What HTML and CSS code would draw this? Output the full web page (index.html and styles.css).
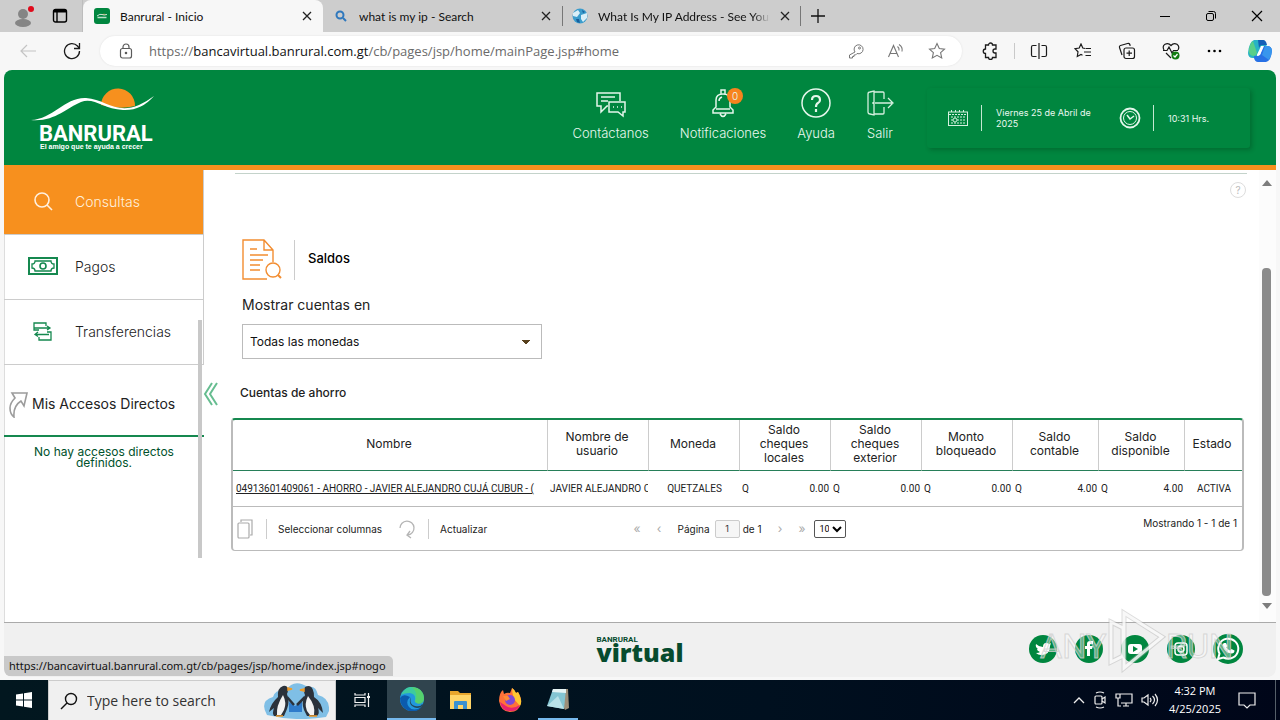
FILE: index.html
```html
<!DOCTYPE html>
<html lang="es">
<head>
    <meta charset="UTF-8">
    <meta name="viewport" content="width=device-width, initial-scale=1.0">
    <title>Banrural - Inicio</title>
    <link rel="stylesheet" href="styles.css">
</head>
<body>
    <!-- Browser tabs -->
    <div class="tab-strip">
        <div class="tab-tools">
            <button class="icon-btn" aria-label="Profile">
                <svg width="20" height="24" viewBox="0 0 20 24"><circle cx="9" cy="10" r="5" fill="#858585"/><ellipse cx="9" cy="19" rx="8" ry="4" fill="#858585"/><circle cx="17" cy="5" r="3" fill="#e00b1c"/></svg>
            </button>
            <button class="icon-btn" aria-label="Tab actions">
                <svg width="16" height="16" viewBox="0 0 16 16" fill="none" stroke="#000" stroke-width="1.4"><rect x="1.5" y="1.5" width="13" height="12.5" rx="2"/><path d="M2 3h12" stroke-width="3"/><path d="M5 3v11"/></svg>
            </button>
        </div>
        <div class="tab tab-active">
            <svg width="16" height="16" viewBox="0 0 16 16"><rect width="16" height="16" rx="3" fill="#00863f"/><path d="M8 6.500a2.500 2 0 0 1 4 0z" fill="#f79020"/><path d="M3 8Q6 5.500 8 6.500t5 0" stroke="#fff" stroke-width=".8" fill="none"/><path d="M3.500 9.500h9" stroke="#b9dfc8" stroke-width="1.500"/></svg>
            <span class="tab-title">Banrural - Inicio</span>
            <button class="icon-btn" aria-label="Close tab"><svg width="10" height="10" viewBox="0 0 10 10"><path d="M1 1l8 8M9 1L1 9" stroke="#222" stroke-width="1.3"/></svg></button>
        </div>
        <div class="tab">
            <svg width="16" height="16" viewBox="0 0 16 16" fill="none" stroke="#2f78bd" stroke-width="2"><circle cx="7" cy="7" r="3.500"/><path d="M10 10l3 3"/></svg>
            <span class="tab-title">what is my ip - Search</span>
            <button class="icon-btn" aria-label="Close tab"><svg width="10" height="10" viewBox="0 0 10 10"><path d="M1 1l8 8M9 1L1 9" stroke="#222" stroke-width="1.3"/></svg></button>
        </div>
        <div class="tab tab-divided">
            <svg width="16" height="16" viewBox="0 0 16 16"><circle cx="8" cy="8" r="7.500" fill="#3b9ccc"/><path d="M1 5l5-3 2 3-3 4-4-1zM9 7l6-2v5l-4 4-2-3z" fill="#d9eff8"/><path d="M4 11l3 0 1 4-3-1zM10 2l3 2-2 1z" fill="#175f9c"/></svg>
            <span class="tab-title tab-fade">What Is My IP Address - See Your</span>
            <button class="icon-btn" aria-label="Close tab"><svg width="10" height="10" viewBox="0 0 10 10"><path d="M1 1l8 8M9 1L1 9" stroke="#222" stroke-width="1.3"/></svg></button>
        </div>
        <button class="icon-btn new-tab" aria-label="New tab"><svg width="14" height="14" viewBox="0 0 14 14"><path d="M7 0v14M0 7h14" stroke="#111" stroke-width="1.3"/></svg></button>
        <div class="window-buttons">
            <button class="icon-btn" aria-label="Minimize"><svg width="12" height="12" viewBox="0 0 12 12"><path d="M1 6.500h10" stroke="#000"/></svg></button>
            <button class="icon-btn" aria-label="Restore"><svg width="12" height="12" viewBox="0 0 12 12" fill="none" stroke="#000"><rect x="1.500" y="3.500" width="7" height="7" rx="1.500"/><path d="M3.500 1.500h5a2 2 0 0 1 2 2v5"/></svg></button>
            <button class="icon-btn" aria-label="Close"><svg width="12" height="12" viewBox="0 0 12 12"><path d="M1 1l10 10M11 1L1 11" stroke="#000" stroke-width="1.2"/></svg></button>
        </div>
    </div>

    <!-- Address bar -->
    <div class="toolbar">
        <button class="icon-btn nav-btn" aria-label="Back"><svg width="18" height="16" viewBox="0 0 18 16" fill="none" stroke="#c4c4c4" stroke-width="1.2"><path d="M17 8H2M8 2L2 8l6 6"/></svg></button>
        <button class="icon-btn nav-btn" aria-label="Refresh"><svg width="18" height="18" viewBox="0 0 18 18" fill="none" stroke="#1b1b1b" stroke-width="1.3"><path d="M16.500 9A7.500 7.500 0 1 1 14.500 4l2 2.500"/><path d="M16.500 1v5.500H11"/></svg></button>
        <div class="address">
            <svg width="14" height="16" viewBox="0 0 14 16" fill="none" stroke="#5b5b5b" stroke-width="1.2"><rect x="1.500" y="5.500" width="11" height="9.500" rx="2"/><path d="M4 5.500V4a3 3 0 0 1 6 0v1.500"/><circle cx="7" cy="10" r=".7" fill="#555"/></svg>
            <div class="url" role="textbox" aria-label="Address" contenteditable="true">https://<span class="url-host">bancavirtual.banrural.com.gt</span>/cb/pages/jsp/home/mainPage.jsp#home</div>
            <button class="icon-btn" aria-label="Passwords"><svg width="16" height="16" viewBox="0 0 16 16" fill="none" stroke="#777"><path d="M7 9a4.500 4.500 0 1 1 2 1.500L7.500 12H6v1.500H4.500V15H1.500v-3z"/><circle cx="11.500" cy="5" r="1"/></svg></button>
            <button class="icon-btn" aria-label="Read aloud"><svg width="18" height="16" viewBox="0 0 18 16" fill="none" stroke="#777" stroke-width="1.1"><path d="M1.500 14L6.500 2.500 11.500 14M3.200 10.500h6.600M10.500 3.500q2 1.500 1.500 4M12 1.500q4 2.500 3 7"/></svg></button>
            <button class="icon-btn" aria-label="Favorite"><svg width="18" height="18" viewBox="0 0 18 18" fill="none" stroke="#777" stroke-width="1.100"><path d="M9 1.500l2.300 5 5.200.6-3.900 3.600 1.100 5.300L9 13.300 4.300 16l1.100-5.300L1.500 7.100l5.200-.6z"/></svg></button>
        </div>
        <div class="toolbar-icons">
            <button class="icon-btn" aria-label="Extensions"><svg width="18" height="18" viewBox="0 0 18 18" fill="none" stroke="#1b1b1b" stroke-width="1.300"><path d="M4.500 3h3a2 2 0 1 1 4 0h3.500v4h-1a2 2 0 1 0 0 4h1v4.500h-3.500a2 2 0 1 1-4 0h-3V11.500a2.200 2.200 0 1 1 0-4.500z"/></svg></button>
            <span class="toolbar-line"></span>
            <button class="icon-btn" aria-label="Split screen"><svg width="18" height="16" viewBox="0 0 18 16" fill="none" stroke="#1b1b1b" stroke-width="1.200"><path d="M6.500 2.500H3a1.500 1.500 0 0 0-1.500 1.500v8A1.500 1.500 0 0 0 3 13.500h3.500M11.500 2.500H15A1.500 1.500 0 0 1 16.500 4v8a1.500 1.500 0 0 1-1.500 1.500h-3.500M9 0v16"/></svg></button>
            <button class="icon-btn" aria-label="Favorites"><svg width="18" height="16" viewBox="0 0 18 16" fill="none" stroke="#1b1b1b" stroke-width="1.200"><path d="M11 5.500L8.800 5 7 1 5.200 5 1 5.700 4 8.800 3.300 13.500 7 11.500l1.500.8M11.500 5.500H17M10 9h7M11.500 12.500H17"/></svg></button>
            <button class="icon-btn" aria-label="Collections"><svg width="18" height="18" viewBox="0 0 18 18" fill="none" stroke="#1b1b1b" stroke-width="1.200"><rect x="6" y="6" width="10.500" height="10.500" rx="2"/><path d="M11.200 8.500v5.500M8.500 11.200H14M4 13L1.500 5.500Q1 4 2.500 3.500L9.500 1.500Q11.500 1 12 3l.2.800"/></svg></button>
            <button class="icon-btn" aria-label="Browser essentials"><svg width="18" height="18" viewBox="0 0 18 18" fill="none" stroke="#1b1b1b" stroke-width="1.200"><path d="M2 8Q0 4 3 2.200 6.500.500 9 3.500 11.500.500 15 2.200 18 4.500 16 8M4 11l5 5"/><path d="M1 8.500h4L7 5l3 6 1.500-2.500H16"/><circle cx="13.500" cy="13.500" r="4" fill="#117c10" stroke="none"/><path d="M11.500 13.500l1.500 1.500 2.500-3" stroke="#fff"/></svg></button>
            <button class="icon-btn" aria-label="More"><svg width="16" height="4" viewBox="0 0 16 4"><circle cx="3" cy="2" r="1.300"/><circle cx="8.500" cy="2" r="1.300"/><circle cx="14" cy="2" r="1.300"/></svg></button>
            <button class="icon-btn" aria-label="Copilot"><svg width="24" height="22" viewBox="0 0 24 22"><path d="M6 0h8q3 0 4 4l1 3h-5L10 13l-2 5H5q-5 0-5-5Q1 2 6 0z" fill="#28b3c5"/><path d="M10 0h5q3 0 4 5l-5 0q-2 0-3 3z" fill="#145fb7"/><path d="M1 9q1-6 4-8l4 12q-1 3-3 3Q0 16 1 9z" fill="#58cf8a"/><path d="M18 22h-8q-3 0-4-4l0-2h4q2 0 3-4l2-6h4q5 0 5 5-1 10-6 11z" fill="#2871e5"/><path d="M14 15l3-9h3q4 1 4 5-1 6-3 9z" fill="#3896ed"/><path d="M9 15l4-9h3l-4 9z" fill="#fff"/></svg></button>
        </div>
    </div>

    <!-- Bank page -->
    <div class="page">
        <header class="header">
            <svg class="logo" width="124" height="64" viewBox="0 0 124 64">
                <path d="M70 17a17 17 0 0 1 34 1q-14 4-34-1z" fill="#f7901e"/>
                <path d="M0 32C22 31 34 9 55 10 74 11 85 27 108 17Q115 14 123 8 110 23 92 22C72 21 63 9 50 14 35 20 24 34 0 32z" fill="#fff"/>
                <text x="8" y="53" class="logo-name">BANRURAL</text>
                <text x="9" y="61" class="logo-slogan">El amigo que te ayuda a crecer</text>
            </svg>
            <nav class="header-nav">
                <a href="#contacto"><svg width="32" height="30" viewBox="0 0 32 30" fill="none" stroke="#e4f6eb" stroke-width="1.500"><path d="M13 18h-1l-6 6v-6H2V5h23v8M6 9h14M6 13h7"/><path d="M14 14h16v10h-2v4l-5-4h-9z"/><path d="M18 19h1M22 19h1M26 19h1"/></svg>Contáctanos</a>
                <a href="#notificaciones"><svg width="30" height="30" viewBox="0 0 30 30" fill="none" stroke="#e4f6eb" stroke-width="1.500"><path d="M5 25v-3l3-3v-7q0-6 7-6t7 6v7l3 3v3zM12 26q3 5 6 0M13 6V2h4v4M11 13q0-3 3-4M8 21h14"/></svg><span class="badge">0</span>Notificaciones</a>
                <a href="#ayuda"><svg width="30" height="30" viewBox="0 0 30 30" fill="none" stroke="#e4f6eb" stroke-width="1.500"><circle cx="15" cy="15" r="14"/><path d="M11 12q0-4 4-4t4 4q0 2-2 3t-2 4M15 21v3" stroke-width="2.200"/></svg>Ayuda</a>
                <a href="#salir"><svg width="28" height="30" viewBox="0 0 28 30" fill="none" stroke="#d5f0df" stroke-width="1.300"><path d="M4 4l4-1v24l-4-1q-2 0-2-2V6q0-2 2-2zM8 4h9q1 0 1 1v6M8 26h9q1 0 1-1v-6M7 14v2M9 15h17M22 10l5 5-5 5"/></svg>Salir</a>
            </nav>
            <div class="clock-box">
                <svg width="22" height="18" viewBox="0 0 22 18" fill="none" stroke="#d5f0df"><rect x="1.500" y="3" width="19" height="13.500"/><path d="M2 5.500h18M4.500 1v3M8.500 1v3M12.500 1v3M16.500 1v3M4 8h14M4 11h14M4 14h14" stroke-dasharray="2 1"/><circle cx="8" cy="11" r="2" fill="#00863f"/></svg>
                <span class="box-line"></span>
                <span class="date">Viernes 25 de Abril de 2025</span>
                <svg width="22" height="22" viewBox="0 0 22 22" fill="none" stroke="#e4f6eb"><circle cx="11" cy="11" r="9.500" stroke-width="1.800"/><circle cx="11" cy="11" r="6.500"/><path d="M8 8l3 4 4-3" stroke-width="1.500"/></svg>
                <span class="box-line"></span>
                <span class="time">10:31 Hrs.</span>
            </div>
        </header>

        <div class="main">
            <aside class="sidebar">
                <nav class="menu">
                    <a class="menu-item active" href="#consultas"><svg width="32" height="20" viewBox="0 0 32 20" fill="none" stroke="#fff0df" stroke-width="1.600"><circle cx="15" cy="9" r="7"/><path d="M20 14l5 5"/></svg>Consultas</a>
                    <a class="menu-item" href="#pagos"><svg width="32" height="20" viewBox="0 0 32 20" fill="none" stroke="#15884f" stroke-width="2"><rect x="2" y="2" width="28" height="16"/><path d="M8 5h16q0 3 3 3v4q-3 0-3 3H8q0-3-3-3V8q3 0 3-3z" stroke-width="1.300"/><circle cx="16" cy="10" r="3" stroke-width="1.600"/></svg>Pagos</a>
                    <a class="menu-item" href="#transferencias"><svg width="32" height="20" viewBox="0 0 32 20" fill="none" stroke="#15884f" stroke-width="1.300"><path d="M12 9H7V2h12v3M7 7h16M20 5l3 2-3 2M11 11l-3 2.500 3 2M8 13.500h14M20 11h4v8H12v-3"/></svg>Transferencias</a>
                </nav>
                <h2 class="shortcuts-title"><svg width="24" height="28" viewBox="0 0 24 28" fill="none" stroke="#9c9c9c" stroke-width="1.600"><path d="M7 3h15l-3 13-3-5q-8 5-7 16-4-3-4-9 0-5 5-10z"/></svg>Mis Accesos Directos</h2>
                <p class="shortcuts-empty">No hay accesos directos definidos.</p>
                <span class="side-thumb"></span>
                <button class="icon-btn collapse" aria-label="Ocultar menú"><svg width="16" height="24" viewBox="0 0 16 24" fill="none" stroke="#66bd90" stroke-width="2"><path d="M9 1L2 12l7 11M14 1L7 12l7 11"/></svg></button>
            </aside>

            <main class="content">
                <hr class="top-line">
                <button class="help-dot" aria-label="Ayuda">?</button>
                <div class="section-title">
                    <svg width="40" height="42" viewBox="0 0 40 42" fill="none" stroke="#f28d31" stroke-width="1.400"><path d="M25 40H1V1h21l9 10v12M22 1v10h9"/><path d="M8 10h7M8 16h18M8 21h13M8 26h10M8 31h10"/><circle cx="31" cy="31" r="7"/><path d="M36 36l3 3" stroke-width="2"/></svg>
                    <h1>Saldos</h1>
                </div>
                <label class="currency-label" for="moneda">Mostrar cuentas en</label>
                <select class="currency" id="moneda">
                    <option>Todas las monedas</option>
                </select>
                <h2 class="table-title">Cuentas de ahorro</h2>

                <div class="grid">
                    <table>
                        <colgroup>
                            <col>
                            <col class="col-user">
                            <col class="col-money"><col class="col-money"><col class="col-money"><col class="col-money">
                            <col class="col-balance"><col class="col-balance">
                            <col class="col-state">
                        </colgroup>
                        <thead>
                            <tr>
                                <th>Nombre</th>
                                <th>Nombre de usuario</th>
                                <th>Moneda</th>
                                <th>Saldo cheques locales</th>
                                <th>Saldo cheques exterior</th>
                                <th>Monto bloqueado</th>
                                <th>Saldo contable</th>
                                <th>Saldo disponible</th>
                                <th>Estado</th>
                            </tr>
                        </thead>
                        <tbody>
                            <tr>
                                <td><a href="#cuenta">04913601409061 - AHORRO - JAVIER ALEJANDRO CUJÁ CUBUR - (</a></td>
                                <td>JAVIER ALEJANDRO C</td>
                                <td class="center">QUETZALES</td>
                                <td><span class="amount"><span>Q</span><span>0.00</span></span></td>
                                <td><span class="amount"><span>Q</span><span>0.00</span></span></td>
                                <td><span class="amount"><span>Q</span><span>0.00</span></span></td>
                                <td><span class="amount"><span>Q</span><span>4.00</span></span></td>
                                <td><span class="amount"><span>Q</span><span>4.00</span></span></td>
                                <td class="center">ACTIVA</td>
                            </tr>
                        </tbody>
                    </table>
                    <div class="grid-footer">
                        <div class="grid-actions">
                            <button class="grid-btn"><svg width="16" height="20" viewBox="0 0 16 20" fill="none" stroke="#aaa" stroke-width="1.200"><rect x="1" y="4" width="11" height="15" rx="1"/><path d="M4 3V1h11v15h-2"/></svg><span>Seleccionar columnas</span></button>
                            <button class="grid-btn"><svg width="16" height="20" viewBox="0 0 16 20" fill="none" stroke="#b5b5b5" stroke-width="1.300"><path d="M1 9a7 7 0 1 1 8 7M11 12l-3 4 4 3"/></svg><span>Actualizar</span></button>
                        </div>
                        <div class="pager">
                            <button class="page-arrow" aria-label="Primera">«</button>
                            <button class="page-arrow" aria-label="Anterior">‹</button>
                            <label for="pagina">Página</label>
                            <input id="pagina" class="page-input" type="text" value="1">
                            <span>de 1</span>
                            <button class="page-arrow next" aria-label="Siguiente">›</button>
                            <button class="page-arrow" aria-label="Última">»</button>
                            <select class="page-size" aria-label="Filas"><option>10</option></select>
                        </div>
                        <div class="grid-info">Mostrando 1 - 1 de 1</div>
                    </div>
                </div>
            </main>
            <div class="scrollbar">
                <svg width="10" height="6" viewBox="0 0 10 6"><path d="M5 0l5 6H0z" fill="#7d7d7d"/></svg>
                <span class="scroll-thumb"></span>
                <svg width="10" height="6" viewBox="0 0 10 6"><path d="M0 0h10L5 6z" fill="#7d7d7d"/></svg>
            </div>
        </div>

        <footer class="footer">
            <div class="footer-logo"><span class="footer-small">BANRURAL</span><span class="footer-big">virtual</span></div>
            <div class="social">
                <a href="#twitter" aria-label="Twitter"><svg width="28" height="28" viewBox="0 0 28 28"><circle cx="14" cy="14" r="14" fill="#00863f"/><path d="M7 9q3 3 7 3 0-4 3-4 2 0 3 1l2-1-1 3q0 9-9 9-3 0-5-2 3 0 4-1-3-1-3-3h1q-3-2-2-5z" fill="#fff"/></svg></a>
                <a href="#facebook" aria-label="Facebook"><svg width="28" height="28" viewBox="0 0 28 28"><circle cx="14" cy="14" r="14" fill="#00863f"/><path d="M12 21v-7h-2v-3h2V9q0-3 3-3h3v3h-2q-1 0-1 1v1h3l-1 3h-2v7z" fill="#fff"/></svg></a>
                <a href="#youtube" aria-label="YouTube"><svg width="28" height="28" viewBox="0 0 28 28"><circle cx="14" cy="14" r="14" fill="#00863f"/><rect x="7" y="9" width="14" height="10" rx="3" fill="#fff"/><path d="M12 11v6l5-3z" fill="#00863f"/></svg></a>
                <a href="#instagram" aria-label="Instagram"><svg width="28" height="28" viewBox="0 0 28 28" fill="none" stroke="#fff" stroke-width="1.500"><circle cx="14" cy="14" r="14" fill="#00863f" stroke="none"/><rect x="8" y="8" width="12" height="12" rx="3"/><circle cx="14" cy="14" r="3"/><circle cx="17.500" cy="10.500" r=".3"/></svg></a>
                <a href="#whatsapp" aria-label="WhatsApp"><svg width="30" height="30" viewBox="0 0 30 30" fill="none"><circle cx="15" cy="15" r="15" fill="#00863f"/><path d="M5 25l1.500-5.500A10 10 0 1 1 10.500 23.500z" stroke="#fff" stroke-width="2"/><path d="M11 9l2 0 1.500 3-1 1.500q1 2 3.500 3l1.500-1.500 3 1.500q0 3-3 3-7-1-9-8 0-2 1.500-2.500z" fill="#fff"/></svg></a>
            </div>
            <svg class="watermark" width="200" height="66" viewBox="0 0 200 66">
                <g fill="#fff" fill-opacity=".4" stroke="#cfcfcf" stroke-opacity=".8">
                    <text x="2" y="50" class="mark-text">ANY</text>
                    <text x="128" y="50" class="mark-text">RUN</text>
                </g>
                <path d="M73 14l12 6v28l-12 6zM86 5l38 24-38 31z" fill="none" stroke="#aaa" stroke-opacity=".4" stroke-width="5"/>
                <path d="M73 14l12 6v28l-12 6zM86 5l38 24-38 31z" fill="none" stroke="#fff" stroke-opacity=".8" stroke-width="3"/>
            </svg>
        </footer>
        <div class="status-link">https://bancavirtual.banrural.com.gt/cb/pages/jsp/home/index.jsp#nogo</div>
    </div>

    <!-- Windows taskbar -->
    <div class="taskbar">
        <button class="task-btn task-start" aria-label="Start"><svg width="16" height="16" viewBox="0 0 16 16" fill="#fff"><path d="M0 2.500l7-1v6H0zM8 1.300L16 0v7.500H8zM0 8.500h7v6l-7-1zM8 8.500h8V16l-8-1.200z"/></svg></button>
        <div class="search">
            <svg width="18" height="18" viewBox="0 0 18 18" fill="none" stroke="#111" stroke-width="1.400"><circle cx="11" cy="7" r="5.500"/><path d="M7 11l-6 6"/></svg>
            <input class="search-input" type="text" placeholder="Type here to search" aria-label="Search">
            <svg width="66" height="37" viewBox="0 0 66 37">
                <path d="M4 33q-8-14 6-18 2-8 13-7 8-12 22-3 8-2 10 8 12 3 11 16l-3 6q-30 5-59-2z" fill="#7fbfe6"/>
                <path d="M26 20l6 4 7-5v11H26z" fill="#2f7ccb"/>
                <path d="M20 4q4-1 5 3 0 3-1 5 3 8 0 15l-3 7H11q-2-3 0-8l-5 4q2-9 9-15-1-9 5-11z" fill="#2b323b"/>
                <path d="M20 13q4 8 1 15l-3 5h-4q-1-9 6-20z" fill="#f3f3f3"/>
                <path d="M46 4q-5 0-5 4 0 3 1 5-4 8-1 15l3 6h10q3-3 1-8l5 5q-1-11-9-16 0-10-5-11z" fill="#2b323b"/>
                <path d="M45 14q-4 8-1 15l3 4h4q2-9-6-19z" fill="#f3f3f3"/>
                <path d="M25 6l4 1-4 1zM41 7l-4 1 4 1zM13 34h7M46 34h8" fill="#ef9b28" stroke="#ef9b28" stroke-width="1.500"/>
                <path d="M24 15l7 8M42 15l-8 8" stroke="#2b323b" stroke-width="2.500"/>
            </svg>
        </div>
        <button class="task-btn task-view" aria-label="Task view"><svg width="16" height="16" viewBox="0 0 16 16" fill="none" stroke="#f2f2f2" stroke-width="1.200"><path d="M1 1v2h10V1M1 15v-2h10v2M1 5.500h10v5H1zM14.500 1v14"/><path d="M13 5h3" stroke-width="2"/></svg></button>
        <button class="task-btn task-current" aria-label="Edge"><svg width="24" height="24" viewBox="0 0 24 24"><circle cx="12" cy="12" r="12" fill="#2298dd"/><path d="M1 8Q5-1 13 0q10 1 11 11 0 6-7 5-3-1-2-3 1-6-5-7-6 0-9 2z" fill="#3dcb9e"/><path d="M12 0q12 1 12 12 0 5-6 5l-3-2q4-8-3-15z" fill="#68d64d" opacity=".6"/><path d="M10 10q-5 5-1 10t13 0q-7 7-15 3Q0 19 0 11q3-5 10-1z" fill="#0b5bad"/><path d="M11 10q-2 8 4 9t7-2l1 1q-2 3-6 3-10-2-6-11z" fill="#23475b"/></svg></button>
        <button class="task-btn" aria-label="File Explorer"><svg width="24" height="20" viewBox="0 0 24 20"><path d="M1 1h8l2 2h11v6H1z" fill="#e8a62d"/><path d="M1 5h21v14H1z" fill="#ffd568"/><path d="M5 19v-7q0-1 1-1h11q1 0 1 1v7h-4v-4H9v4z" fill="#3b91d1"/></svg></button>
        <button class="task-btn" aria-label="Firefox"><svg width="24" height="24" viewBox="0 0 24 24"><path d="M1 13Q1 5 5 2l1 4q3-2 6-1l2-5q3 2 4 5l2-1q4 7 3 11-2 9-11 9T1 13z" fill="#ff7139"/><path d="M14 0q3 2 4 5l2-1q5 9 2 14l-6-7q-2-6-2-11z" fill="#ffc832"/><path d="M2 14q2 10 11 9 7 0 9-6-8 5-14 1z" fill="#e8226e"/><circle cx="12" cy="12" r="5" fill="#8049d5"/><path d="M5 8l5 0 2 3-4 2z" fill="#ff8c35"/></svg></button>
        <button class="task-btn task-open" aria-label="Notepad"><svg width="24" height="24" viewBox="0 0 24 24"><path d="M8 2h14l1 19-4 2z" fill="#9e8f79"/><path d="M7 2h13l-2 20-17-3z" fill="#84c5d3"/><path d="M7 2h13v4L6 5z" fill="#e6f4f5"/><path d="M1 19L12 9l6 13z" fill="#b9e2e9"/></svg></button>
        <div class="tray">
            <svg width="12" height="8" viewBox="0 0 12 8" fill="none" stroke="#eee" stroke-width="1.300"><path d="M1 7l5-5 5 5"/></svg>
            <svg width="14" height="18" viewBox="0 0 14 18" fill="none" stroke="#eee" stroke-width="1.200"><rect x="2" y="5" width="7" height="8" rx="1"/><path d="M9 8l3-2v6l-3-2M3 2q4-2 8 0M3 16q4 2 8 0"/></svg>
            <svg width="18" height="14" viewBox="0 0 18 14" fill="none" stroke="#eee" stroke-width="1.200"><path d="M5 1h12v9H6M8 13h6M11 10v3M1 1h4v4H1zM3 5v8h3"/></svg>
            <svg width="18" height="14" viewBox="0 0 18 14" fill="none" stroke="#eee" stroke-width="1.200"><path d="M1 5h2l4-3v10L3 9H1zM9 5q2 2 0 4M11.500 3q4 4 0 8M14 1q5 6 0 12"/></svg>
            <div class="clock"><span>4:32 PM</span><span>4/25/2025</span></div>
            <svg width="18" height="17" viewBox="0 0 18 17" fill="none" stroke="#eee" stroke-width="1.200"><path d="M1 1h16v12h-5l-3 3-3-3H1z"/></svg>
            <span class="desktop-edge"></span>
        </div>
    </div>
</body>
</html>
```

FILE: styles.css
```css
* {
    box-sizing: border-box;
}

body {
    margin: 0;
    height: 100vh;
    display: flex;
    flex-direction: column;
    overflow: hidden;
    background-color: #f7f7f7;
    font-family: "Open Sans", sans-serif;
    font-size: 12px;
    color: #111;
}

button {
    font-family: inherit;
    border: none;
    background: none;
    padding: 0;
    cursor: pointer;
}

a {
    color: inherit;
    text-decoration: none;
}

svg {
    flex: none;
    display: block;
}

.icon-btn {
    display: flex;
    align-items: center;
    justify-content: center;
    flex: none;
}

/* Browser tabs */
.tab-strip {
    height: 32px;
    flex: none;
    display: flex;
    background-color: #cdcdcd;
}

.tab-tools {
    display: flex;
    align-items: center;
    gap: 18px;
    width: 83px;
    padding-left: 14px;
    border-right: 1px solid #bdbdbd;
}

.tab {
    width: 239px;
    display: flex;
    align-items: center;
    gap: 10px;
    padding: 0 11px 0 10px;
}

.tab-active {
    background-color: #f7f7f7;
    border-radius: 8px 8px 0 0;
    width: 240px;
    padding-left: 11px;
}

.tab-divided {
    background: linear-gradient(#777, #777) left / 1px 20px no-repeat, linear-gradient(#777, #777) right / 1px 20px no-repeat;
}

.tab-title {
    flex: 1;
    overflow: hidden;
    white-space: nowrap;
    font-family: Lato, sans-serif;
    font-size: 12px;
}

.tab-fade {
    mask-image: linear-gradient(to right, #000 90%, transparent);
}

.new-tab {
    width: 34px;
}

.window-buttons {
    display: flex;
    margin-left: auto;
}

.window-buttons .icon-btn {
    width: 46px;
}

/* Address bar */
.toolbar {
    height: 38px;
    flex: none;
    display: flex;
    align-items: center;
    padding: 0 8px 0 6px;
}

.nav-btn {
    width: 44px;
}

.address {
    flex: 1;
    height: 30px;
    margin-left: 6px;
    display: flex;
    align-items: center;
    gap: 23px;
    padding: 0 16px 0 19px;
    border-radius: 15px;
    background-color: #fff;
    box-shadow: 0 0 2px #ddd;
}

.url {
    flex: 1;
    margin-left: -7px;
    font-size: 13px;
    white-space: nowrap;
    color: #6a6a6a;
    outline: none;
}

.url-host {
    color: #111;
}

.toolbar-icons {
    display: flex;
    align-items: center;
    gap: 26px;
    padding-left: 19px;
}

.toolbar-line {
    width: 1px;
    height: 16px;
    margin: 0 -11px;
    background-color: #c9c9c9;
}

/* Bank page */
.page {
    position: relative;
    flex: 1;
    min-height: 0;
    display: flex;
    flex-direction: column;
    margin: 0 4px 3px;
    border-radius: 8px;
    overflow: hidden;
    background-color: #fff;
    font-family: Inter, sans-serif;
    color: #222;
}

.header {
    height: 100px;
    flex: none;
    display: flex;
    align-items: flex-start;
    padding: 18px 26px 0 27px;
    background-color: #00863f;
    border-bottom: 5px solid #f7901e;
    color: #e9f8ef;
}

.logo-name {
    font: bold 22px Roboto, sans-serif;
    fill: #fff;
}

.logo-slogan {
    font: bold 7px "Liberation Sans", sans-serif;
    fill: #fff;
}

.header-nav {
    display: flex;
    gap: 31px;
    margin-left: auto;
    margin-right: 33px;
}

.header-nav a {
    position: relative;
    display: flex;
    flex-direction: column;
    align-items: center;
    gap: 7px;
    font-size: 13px;
    line-height: 16px;
    font-weight: 300;
}

.badge {
    position: absolute;
    left: 50%;
    top: 0;
    margin-left: 4px;
    width: 16px;
    border-radius: 8px;
    background-color: #f7831e;
    text-align: center;
    font-size: 10px;
}

.clock-box {
    width: 323px;
    height: 60px;
    display: flex;
    align-items: center;
    padding-left: 20px;
    border-radius: 3px;
    box-shadow: 2px 2px 4px rgba(0, 50, 20, 0.3);
    font-size: 9px;
    line-height: 11px;
}

.box-line {
    width: 1px;
    height: 26px;
    margin: 0 14px 0 12px;
    background-color: #c5e8d2;
}

.date {
    width: 109px;
    margin-right: 14px;
}

.main {
    flex: 1;
    min-height: 0;
    display: flex;
}

/* Sidebar */
.sidebar {
    position: relative;
    width: 200px;
    flex: none;
    box-shadow: inset 1px 0 #ddd;
}

.menu-item {
    display: flex;
    align-items: center;
    gap: 16px;
    height: 65px;
    padding: 0 0 2px 23px;
    border-right: 1px solid #ccc;
    border-bottom: 1px solid #ccc;
    font-size: 14px;
    font-weight: 300;
}

.active {
    background-color: #f7901e;
    color: #fff0df;
}

.shortcuts-title {
    display: flex;
    align-items: center;
    gap: 3px;
    height: 72px;
    margin: 0;
    padding: 7px 0 0 1px;
    border-bottom: 2px solid #15884f;
    font-size: 14px;
    font-weight: 400;
}

.shortcuts-empty {
    margin: 9px 20px;
    text-align: center;
    font-size: 12px;
    line-height: 11px;
    color: #00512b;
}

.side-thumb {
    position: absolute;
    right: 2px;
    top: 150px;
    width: 4px;
    height: 238px;
    background-color: #c8c8c8;
}

.collapse {
    position: absolute;
    right: -15px;
    top: 212px;
}

/* Content */
.content {
    position: relative;
    flex: 1;
    min-width: 0;
    padding: 3px 15px 0 27px;
}

.top-line {
    margin: 0 -3px 65px 4px;
    border: none;
    border-top: 1px solid #c4d3cb;
}

.help-dot {
    position: absolute;
    right: 13px;
    top: 12px;
    width: 16px;
    height: 16px;
    border: 1px solid #ddd;
    border-radius: 8px;
    font-size: 10px;
    line-height: 14px;
    color: #bbb;
}

.section-title {
    display: flex;
    align-items: center;
    gap: 12px;
    padding-left: 11px;
}

.section-title h1 {
    margin: 0;
    padding: 0 0 4px 13px;
    border-left: 1px solid #ccc;
    font-size: 13px;
    line-height: 36px;
    font-weight: 500;
    color: #000;
}

.currency-label {
    display: block;
    margin: 13px 0 8px 11px;
    font-size: 14px;
    line-height: 22px;
}

.currency {
    display: block;
    width: 300px;
    height: 35px;
    margin-left: 11px;
    padding: 0 7px;
    appearance: none;
    border: 1px solid #bbb;
    background: conic-gradient(from -45deg at 50% 100%, #57401d 90deg, transparent 0) right 11px center / 8px 4px no-repeat;
    font-family: inherit;
    font-size: 12px;
    color: #111;
}

.table-title {
    margin: 25px 0 16px 9px;
    font-size: 12px;
    line-height: 18px;
    font-weight: 500;
}

/* Accounts table */
.grid {
    border: 1px solid #bbb;
    border-left-width: 2px;
    border-right-width: 2px;
    border-top: 2px solid #15884f;
    border-radius: 4px;
}

table {
    width: 100%;
    table-layout: fixed;
    border-collapse: separate;
    border-spacing: 0;
}

.col-user {
    width: 101px;
}

.col-money {
    width: 91px;
}

.col-balance {
    width: 86px;
}

.col-state {
    width: 58px;
}

th {
    height: 51px;
    padding: 0 9px 3px 7px;
    border-left: 1px solid #ccc;
    border-bottom: 1px solid #277f59;
    font-size: 12px;
    line-height: 14px;
    font-weight: 400;
}

th:first-child {
    border-left: none;
}

th:last-child {
    padding: 0 3px 3px 0;
}

td {
    height: 36px;
    padding: 0 1px 0 3px;
    overflow: hidden;
    white-space: nowrap;
    border-bottom: 1px solid #bbb;
    font-family: Roboto, sans-serif;
    font-size: 10px;
}

td a {
    text-decoration: underline;
}

.center {
    text-align: center;
}

.amount {
    display: flex;
    justify-content: space-between;
}

.grid-footer {
    display: grid;
    grid-template-columns: 1fr auto 1fr;
    height: 43px;
    padding: 0 5px 0 4px;
    align-items: center;
    font-size: 10px;
}

.grid-actions {
    display: flex;
    gap: 17px;
}

.grid-btn {
    display: flex;
    align-items: center;
    gap: 13px;
    font-size: 10px;
    color: #222;
}

.grid-btn span {
    padding-left: 11px;
    border-left: 1px solid #ccc;
    line-height: 20px;
}

.pager {
    display: flex;
    align-items: center;
    gap: 3px;
}

.pager label {
    margin: 0 2px 0 6px;
}

.page-arrow {
    width: 19px;
    font-size: 12px;
    color: #aaa;
}

.next {
    margin-left: 6px;
}

.page-input {
    width: 25px;
    height: 18px;
    border: 1px solid #ccc;
    border-radius: 2px;
    background-color: #f6f6f6;
    text-align: center;
    font-family: inherit;
    font-size: 9px;
    color: #333;
}

.page-size {
    width: 32px;
    height: 18px;
    padding: 0;
    border: 1px solid #555;
    border-radius: 2px;
    background-color: #fff;
    font-family: Roboto, sans-serif;
    font-size: 9px;
}

.grid-info {
    justify-self: end;
    padding-bottom: 11px;
}

/* Vertical scrollbar */
.scrollbar {
    width: 17px;
    flex: none;
    display: flex;
    flex-direction: column;
    align-items: center;
    padding: 10px 2px 13px 0;
    background-color: #fcfcfc;
}

.scroll-thumb {
    width: 9px;
    flex: 1;
    margin: 82px 0 7px;
    border-radius: 4px;
    background-color: #8b8b8b;
}

/* Footer */
.footer {
    position: relative;
    height: 55px;
    flex: none;
    display: grid;
    grid-template-columns: 1fr auto 1fr;
    align-items: center;
    padding: 0 33px 2px 33px;
    background-color: #f0f0f0;
    border-top: 1px solid #aaa;
}

.footer-logo {
    grid-column: 2;
    display: flex;
    flex-direction: column;
    font-family: "Open Sans", sans-serif;
    color: #064b2e;
}

.footer-small {
    font-family: Roboto, sans-serif;
    font-size: 8px;
    line-height: 6px;
    font-weight: 700;
}

.footer-big {
    font-size: 25px;
    line-height: 18px;
    font-weight: 800;
}

.social {
    display: flex;
    align-items: center;
    justify-content: flex-end;
    gap: 18px;
}

.watermark {
    position: absolute;
    right: 38px;
    bottom: 3px;
}

.mark-text {
    font: 34px Roboto, sans-serif;
}

.status-link {
    position: absolute;
    left: 0;
    bottom: 1px;
    padding: 0 7px 0 5px;
    border-radius: 0 5px 0 5px;
    background-color: #c9c9c9;
    font-family: "Noto Sans", sans-serif;
    font-size: 11px;
    line-height: 20px;
    color: #111;
}

/* Taskbar */
.taskbar {
    height: 40px;
    flex: none;
    display: flex;
    background: linear-gradient(to right, #02171f, #00101f 60%, #000619);
    font-family: "Open Sans", sans-serif;
}

.task-btn {
    width: 49px;
    display: flex;
    align-items: center;
    justify-content: center;
}

.task-start {
    width: 48px;
}

.task-view {
    width: 51px;
}

.task-current {
    background-color: #30444e;
    border-bottom: 2px solid #76b9ed;
}

.task-open {
    width: 40px;
    margin-left: 4px;
    border-bottom: 2px solid #76b9ed;
}

.search {
    width: 288px;
    display: flex;
    align-items: center;
    padding: 0 6px 0 11px;
    gap: 9px;
    background-color: #f0f0f0;
    border: 1px solid #ccc;
    border-bottom: none;
}

.search-input {
    flex: 1;
    min-width: 0;
    padding: 0;
    border: none;
    outline: none;
    background: none;
    font-family: inherit;
    font-size: 14px;
}

.search-input::placeholder {
    color: #333;
}

.tray {
    display: flex;
    align-items: center;
    gap: 8px;
    margin-left: auto;
    color: #fff;
}

.clock {
    display: flex;
    flex-direction: column;
    align-items: center;
    margin-left: 2px;
    font-size: 11px;
    line-height: 18px;
}

.clock + svg {
    margin-left: 9px;
}

.desktop-edge {
    align-self: stretch;
    width: 5px;
    margin-left: 11px;
    border-left: 1px solid #555f69;
}
```
